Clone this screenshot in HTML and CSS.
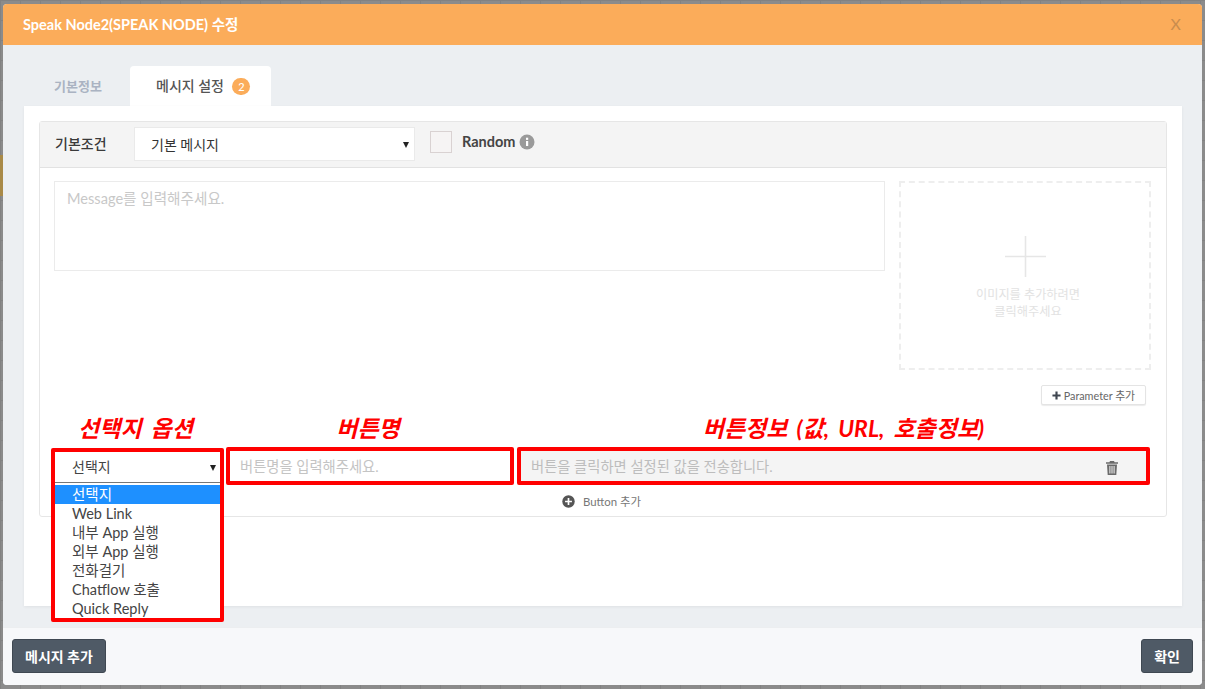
FILE: index.html
```html
<!DOCTYPE html>
<html lang="ko">
<head>
<meta charset="utf-8">
<title>Speak Node2</title>
<link rel="stylesheet" href="styles.css">
</head>
<body>
<div class="gold"></div>
<div class="modal">
  <header class="modal-head">
    <h1 class="modal-title">Speak Node2(SPEAK NODE) 수정</h1>
    <span class="close">X</span>
  </header>
  <main class="modal-body">
    <nav class="tabs">
      <div class="tab">기본정보</div>
      <div class="tab active">메시지 설정 <span class="badge">2</span></div>
    </nav>
    <section class="panel">
      <div class="card">
        <div class="card-head">
          <span class="cond-label">기본조건</span>
          <div class="select cond-select"><span>기본 메시지</span><i class="caret"></i></div>
          <span class="check"></span>
          <span class="random">Random</span>
          <svg class="info" viewBox="0 0 16 16" width="16" height="16"><circle cx="8" cy="8" r="7.5" fill="#9a9a9a"/><rect x="7" y="7" width="2.2" height="5" fill="#fff"/><rect x="7" y="3.7" width="2.2" height="2.2" fill="#fff"/></svg>
        </div>
        <div class="card-body">
          <div class="compose">
            <div class="textarea">Message를 입력해주세요.</div>
            <div class="drop">
              <svg class="drop-plus" viewBox="0 0 41 41" width="41" height="41"><path d="M20.5 0v41M0 20.5h41" stroke="#e6e6e6" stroke-width="1.6" fill="none"/></svg>
              <p class="drop-text">이미지를 추가하려면<br>클릭해주세요</p>
            </div>
          </div>
          <div class="param-row">
            <button class="param"><svg viewBox="0 0 10 10" width="9" height="9"><path d="M5 .5v9M.5 5h9" stroke="#3f4650" stroke-width="2.4"/></svg> Parameter 추가</button>
          </div>
          <div class="btn-row">
            <div class="cell cell-type">
              <span class="note">선택지 옵션</span>
              <div class="red type-box">
                <div class="type-select"><span>선택지</span><i class="caret"></i></div>
                <ul class="menu">
                  <li class="on">선택지</li>
                  <li>Web Link</li>
                  <li>내부 App 실행</li>
                  <li>외부 App 실행</li>
                  <li>전화걸기</li>
                  <li>Chatflow 호출</li>
                  <li>Quick Reply</li>
                </ul>
              </div>
            </div>
            <div class="cell cell-name">
              <span class="note">버튼명</span>
              <div class="red field">버튼명을 입력해주세요.</div>
            </div>
            <div class="cell cell-val">
              <span class="note">버튼정보 (값, URL, 호출정보)</span>
              <div class="red field grey">버튼을 클릭하면 설정된 값을 전송합니다.
                <svg class="trash" viewBox="0 0 12 14" width="12" height="14"><path fill="#6a6a6a" d="M4 0h4l.6 1.2H12v1.6H0V1.2h3.4zM1 3.6h10l-.7 10.4H1.7zM3.4 5v7.5h1V5zm2.1 0v7.5h1V5zm2.1 0v7.5h1V5z"/></svg>
              </div>
            </div>
          </div>
          <div class="add-row">
            <svg viewBox="0 0 14 14" width="13" height="13"><circle cx="7" cy="7" r="6.7" fill="#555"/><path d="M7 3.3v7.4M3.3 7h7.4" stroke="#fff" stroke-width="1.8"/></svg>
            <span>Button 추가</span>
          </div>
        </div>
      </div>
    </section>
  </main>
  <footer class="modal-foot">
    <button class="dark">메시지 추가</button>
    <button class="dark">확인</button>
  </footer>
</div>
</body>
</html>
```
FILE: styles.css
```css
* { box-sizing: border-box; }
html, body { margin: 0; height: 100%; }
body {
  width: 1205px;
  height: 689px;
  overflow: hidden;
  padding: 4px 3px;
  position: relative;
  font-family: "Lato", "Noto Sans CJK KR", sans-serif;
  background-color: #8b8b8b;
  background-image:
    linear-gradient(#828282 1px, transparent 1px),
    linear-gradient(90deg, #828282 1px, transparent 1px);
  background-size: 20px 20px;
}
.gold { position: absolute; left: 0; top: 155px; width: 3px; height: 41px; background: #a98a48; }
.modal {
  position: relative;
  height: 681px;
  display: flex;
  flex-direction: column;
  border-radius: 4px;
  overflow: hidden;
  background: #eceff2;
}
.modal-head {
  height: 41px;
  flex: none;
  background: #fbac5a;
  display: flex;
  align-items: center;
  justify-content: space-between;
  padding: 0 20px 3px;
}
.modal-title { margin: 0; font-size: 14.5px; font-weight: 700; color: #fff; }
.close { font-size: 16px; color: #c98d4e; font-weight: 400; margin-right: 1px; }
.modal-body {
  flex: 1;
  padding: 21px 20px 21px 21px;
  display: flex;
  flex-direction: column;
  min-height: 0;
}
.tabs { display: flex; height: 40px; flex: none; }
.tab {
  width: 106px;
  padding: 10px 0 0 30px;
  font-size: 13px;
  font-weight: 700;
  color: #aab3c2;
}
.tab.active {
  width: 141px;
  padding: 9px 0 0 26px;
  background: #fff;
  border-radius: 4px 4px 0 0;
  color: #555;
  display: block;
  font-size: 14px;
  font-weight: 500;
  white-space: nowrap;
}
.badge {
  display: inline-block;
  width: 18px;
  height: 17px;
  line-height: 17px;
  margin-left: 5px;
  border-radius: 9px;
  background: #fbac5a;
  color: #fff;
  font-size: 11px;
  text-align: center;
}
.panel {
  flex: 1;
  background: #fff;
  padding: 15px;
  box-shadow: 0 1px 3px rgba(0,0,0,.06);
}
.card {
  width: 1128px;
  height: 396px;
  border: 1px solid #e6e6e6;
  border-radius: 3px;
}
.card-head {
  height: 46px;
  background: #f4f4f4;
  border-bottom: 1px solid #e2e2e2;
  display: flex;
  align-items: center;
  padding: 0 0 3px 15px;
  color: #444;
}
.cond-label { width: 79px; font-size: 14px; font-weight: 500; color: #3a3a3a; }
.select {
  position: relative;
  display: flex;
  align-items: center;
  background: #fff;
  border: 1px solid #eaeaea;
  font-size: 14px;
  color: #333;
}
.cond-select { width: 281px; height: 34px; padding-left: 16px; margin-top: 1px; }
.caret {
  position: absolute;
  right: 5px;
  top: 50%;
  margin-top: -2px;
  border-left: 3.5px solid transparent;
  border-right: 3.5px solid transparent;
  border-top: 6px solid #222;
}
.check {
  width: 22px;
  height: 22px;
  margin: 0 10px 2px 15px;
  background: #f6f4f4;
  border: 1px solid #d9d2d2;
}
.random { font-size: 14.5px; font-weight: 700; color: #444; margin: 0 4px 3px 0; }
.info { margin-bottom: 3px; }
.card-body { padding: 13px 15px 0 14px; position: relative; }
.compose { display: flex; justify-content: space-between; }
.textarea {
  width: 831px;
  height: 90px;
  border: 1px solid #ebebeb;
  padding: 5px 12px;
  font-size: 14.6px;
  color: #c8c8c8;
}
.drop {
  width: 252px;
  height: 189px;
  border: 2px dashed #eeeeee;
  text-align: center;
  padding-top: 53px;
}
.drop-plus { display: block; margin: 0 auto; }
.drop-text { margin: 9px 0 0; padding-left: 6px; font-size: 12.2px; line-height: 17px; color: #e2e2e2; }
.param-row { display: flex; justify-content: flex-end; padding: 15px 5px 0 0; height: 35px; }
.param {
  height: 20px;
  width: 105px;
  padding: 0;
  background: #fff;
  border: 1px solid #e4e4e4;
  border-radius: 2px;
  font: 10.8px "Lato", "Noto Sans CJK KR", sans-serif;
  color: #666;
  box-shadow: 0 1px 1px rgba(0,0,0,.08);
  white-space: nowrap;
}
.btn-row { display: flex; margin-top: 42px; height: 38px; position: relative; }
.cell { position: relative; }
.cell-type { width: 173px; margin-left: -3px; margin-right: 2px; height: 38px; }
.cell-name { width: 288px; margin-right: 3px; }
.cell-val { width: 633px; }
.note {
  position: absolute;
  top: -33px;
  left: -2px;
  width: 100%;
  text-align: center;
  font-size: 23px;
  word-spacing: 4px;
  line-height: 28px;
  font-style: italic;
  font-weight: 700;
  color: #f00;
  white-space: nowrap;
}
.cell-val .note { left: 10px; }
.red { border: 4px solid #f00; border-radius: 2px; }
.type-box {
  position: absolute;
  top: 1px;
  left: 0;
  width: 173px;
  height: 174px;
  background: #fff;
  z-index: 2;
}
.type-select {
  position: relative;
  height: 31px;
  padding: 0 0 2px 17px;
  display: flex;
  align-items: center;
  font-size: 14px;
  color: #444;
  border-bottom: 1px solid #777;
}
.type-select .caret { right: 4px; }
.menu { list-style: none; margin: 0; padding: 2px 0 0; font-size: 14.5px; color: #444; }
.menu li { height: 19px; line-height: 19px; padding-left: 17px; white-space: nowrap; }
.menu li.on { background: #1e90ff; color: #fff; }
.field {
  height: 38px;
  padding: 0 10px 2px;
  display: flex;
  align-items: center;
  font-size: 14.3px;
  color: #c4c4c4;
  position: relative;
}
.grey { background: #f4f4f4; color: #bdbdbd; }
.trash { position: absolute; right: 28px; top: 10px; }
.add-row {
  display: flex;
  align-items: center;
  justify-content: center;
  gap: 8px;
  height: 20px;
  margin-top: 6px;
  padding-right: 2px;
  font-size: 11.4px;
  color: #777;
}
.modal-foot {
  height: 58px;
  flex: none;
  background: #f7f8fa;
  border-top: 1px solid #eceef0;
  display: flex;
  justify-content: space-between;
  padding: 11px 9px 0;
}
.dark {
  height: 34px;
  padding: 0 12px;
  background: #4f5a66;
  border: 1px solid #3f4852;
  border-radius: 3px;
  color: #fff;
  font: 700 14px "Lato", "Noto Sans CJK KR", sans-serif;
}
```
